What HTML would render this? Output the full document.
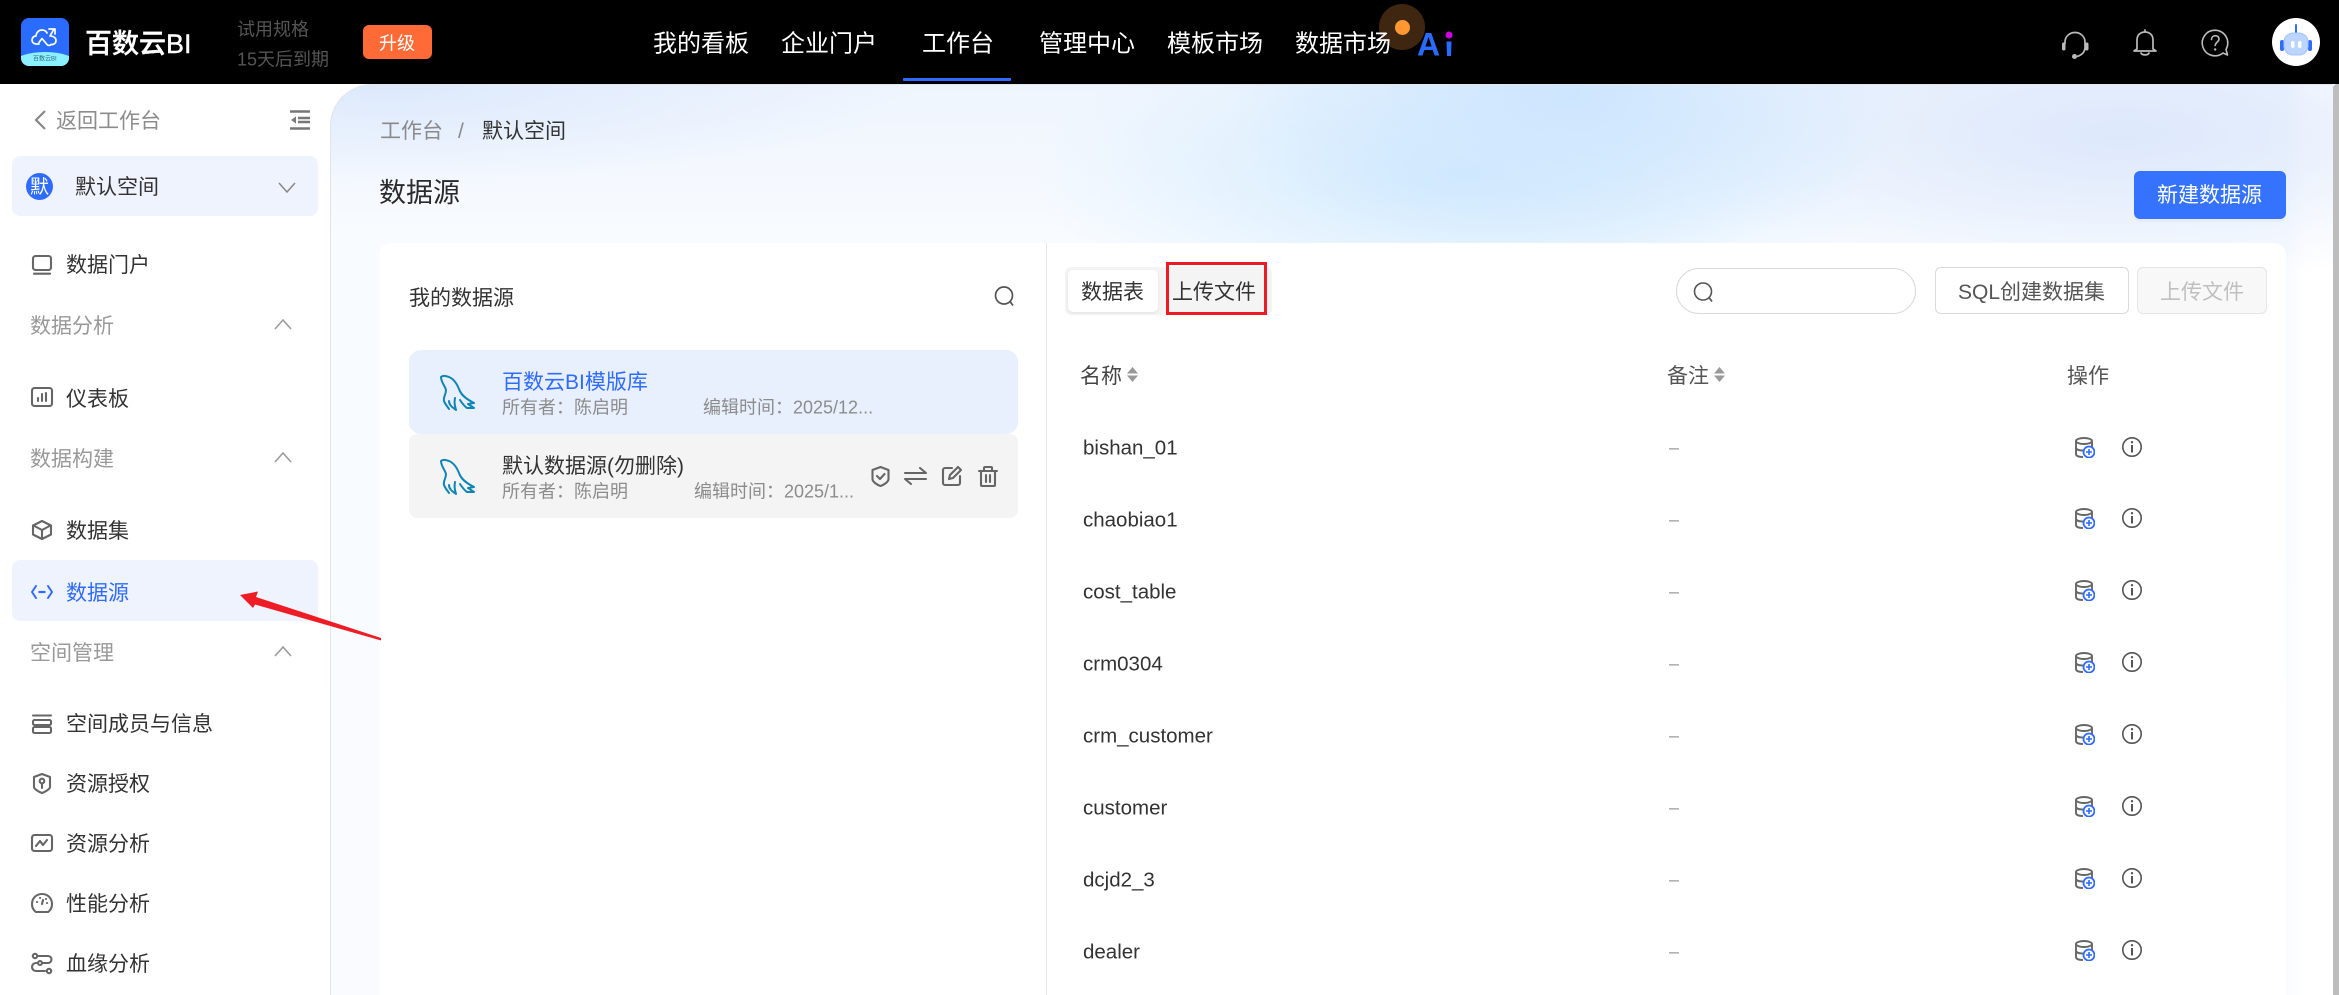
<!DOCTYPE html>
<html lang="zh-CN">
<head>
<meta charset="utf-8">
<title>百数云BI</title>
<style>
html,body{margin:0;padding:0;width:2339px;height:995px;overflow:hidden;background:#fff}
body{position:relative;font-family:"Liberation Sans","Noto Sans CJK SC",sans-serif;color:#333}
.a{position:absolute}
.t{position:absolute;white-space:nowrap;line-height:1;transform:translateY(calc(-50% + 1.5px))}
svg{position:absolute;overflow:visible;fill:none}
.f21{font-size:21px}.f18{font-size:18px}
.ic{stroke:#666;stroke-width:2.1;stroke-linecap:round;stroke-linejoin:round}
.gr{color:#999}
.nav{font-size:24px;color:#fff}
.cell{font-size:20.5px;color:#333;left:1083px}
.dash{font-size:18px;color:#999;left:1669px}
</style>
</head>
<body>
<!-- main background -->
<div class="a" style="left:330px;top:84px;width:2003px;height:911px;border-top-left-radius:42px;border-left:1px solid #e2e4e8;border-top:1px solid #e4e6ea;box-sizing:border-box;background:
radial-gradient(ellipse 340px 170px at 1240px 10px,#cde5fe 0,rgba(205,229,254,0) 100%),
radial-gradient(ellipse 430px 150px at 1130px 90px,#d2ebfe 0,rgba(210,235,254,0) 100%),
radial-gradient(ellipse 520px 100px at 60px 0,#dde9fc 0,rgba(221,233,252,0) 100%),
radial-gradient(ellipse 480px 150px at 1790px 50px,#dde8fb 0,rgba(221,232,251,0) 100%),
linear-gradient(90deg,rgba(255,255,255,0) 1955px,#fff 1975px),
linear-gradient(180deg,#eff5fe 0,#f8fbff 150px,#f9fbff 100%)"></div>
<!-- scrollbar -->
<div class="a" style="left:2333px;top:84px;width:6px;height:911px;background:#bdbdbd;border-top-left-radius:4px"></div>

<!-- header -->
<div class="a" style="left:0;top:0;width:2339px;height:84px;background:#000"></div>
<div class="a" style="left:21px;top:18px;width:48px;height:48px;border-radius:8px;overflow:hidden;background:#2a6cff">
  <div class="a" style="left:-8px;top:34px;width:64px;height:30px;border-radius:50%/12px;background:#8df0ff"></div>
  <div class="t" style="left:12px;top:39.500px;font-size:6px;color:#2a6a80">百数云BI</div>
</div>
<svg style="left:31px;top:27px" width="28" height="20" viewBox="0 0 28 20"><path d="M8 17H5.500C2.500 17 1 15 1 13s1.500-4 4-4c.5-4 3-6 6-6 2.500 0 4 1 5 3M20 9c3 .5 5 2 5 4.500 0 2.500-2 4-4 4h-1c-1 1.500-3 1-4 0l-5-6-3 4M19 9l4-7M18 2h6v5" stroke="#fff" stroke-width="1.700" stroke-linecap="round" stroke-linejoin="round"/></svg>
<div class="t" style="left:85px;top:43px;font-size:27px;font-weight:500;color:#fff;-webkit-text-stroke:.4px #fff">百数云BI</div>
<div class="t f18" style="left:237px;top:28px;color:#555">试用规格</div>
<div class="t f18" style="left:237px;top:58px;color:#555">15天后到期</div>
<div class="a" style="left:363px;top:25px;width:69px;height:34px;border-radius:6px;background:#ff6a37"></div>
<div class="t f18" style="left:379px;top:42px;color:#fff">升级</div>
<div class="t nav" style="left:653px;top:43px">我的看板</div>
<div class="t nav" style="left:781px;top:43px">企业门户</div>
<div class="t nav" style="left:922px;top:43px">工作台</div>
<div class="a" style="left:903px;top:78px;width:108px;height:3px;background:#2f6bff;border-radius:1px"></div>
<div class="t nav" style="left:1039px;top:43px">管理中心</div>
<div class="t nav" style="left:1167px;top:43px">模板市场</div>
<div class="t nav" style="left:1295px;top:43px">数据市场</div>
<div class="a" style="left:1379px;top:4px;width:46px;height:46px;border-radius:50%;background:#3f2610;mix-blend-mode:screen"></div>
<div class="a" style="left:1394.500px;top:19.500px;width:15px;height:15px;border-radius:50%;background:#ff9733"></div>
<div class="t" style="left:1417px;top:42.500px;font-size:32px;font-weight:bold;color:#2a6bff">A</div>
<svg style="left:1440px;top:28px" width="16" height="30" viewBox="0 0 16 30"><circle cx="9" cy="7" r="3.500" fill="#cf00e0"/><path d="M6.500 13.500h5L11 28H7z" fill="#2a6bff"/></svg>
<!-- header icons -->
<svg style="left:2061px;top:31px" width="28" height="29" viewBox="0 0 28 29"><path d="M4 13V11C4 5.500 8.500 1.500 14 1.500S24 5.500 24 11v5c0 5-3 8-8 9.500" stroke="#bbb" stroke-width="1.700"/><rect x="1" y="11.500" width="3.500" height="8" rx="1.700" fill="#bbb"/><rect x="24" y="11.500" width="3.500" height="8" rx="1.700" fill="#bbb"/><circle cx="13.500" cy="25.500" r="2.500" fill="#bbb"/></svg>
<svg style="left:2132px;top:29px" width="26" height="28" viewBox="0 0 26 28"><path d="M13 1v2M5 20V11c0-5 3.500-8 8-8s8 3 8 8v9l3 2H2zM9 24c1 2.500 7 2.500 8 0" stroke="#bbb" stroke-width="1.700" stroke-linejoin="round" stroke-linecap="round"/></svg>
<svg style="left:2201px;top:29px" width="28" height="28" viewBox="0 0 28 28"><path d="M14 1.200a12.800 12.800 0 1 0 8 22.800l4.500 2-1.500-5.500A12.800 12.800 0 0 0 14 1.200z" stroke="#bbb" stroke-width="1.600" stroke-linejoin="round"/><path d="M10.500 10.500c0-5 7.500-5 7.500-.5 0 3-3.500 3-3.800 6.500" stroke="#bbb" stroke-width="1.600" stroke-linecap="round"/><circle cx="14.200" cy="20.500" r="1.200" fill="#bbb"/></svg>
<div class="a" style="left:2272px;top:18px;width:48px;height:48px;border-radius:50%;background:#fff"></div>
<svg style="left:2278px;top:24px" width="36" height="36" viewBox="0 0 36 36"><path d="M18 1v8" stroke="#2f6bff" stroke-width="2" stroke-linecap="round"/><rect x="2" y="16" width="4" height="11" rx="2" fill="#2f6bff"/><rect x="30" y="16" width="4" height="11" rx="2" fill="#2f6bff"/><rect x="6" y="9" width="24" height="22" rx="9" fill="#bcd5ff" stroke="#a3c3ff"/><rect x="13" y="17" width="3.500" height="7" rx="1.700" fill="#fff"/><rect x="20" y="17" width="3.500" height="7" rx="1.700" fill="#fff"/></svg>

<!-- sidebar -->
<svg style="left:33px;top:110px" width="14" height="20" viewBox="0 0 14 20"><path d="M12 1 3 10l9 9" stroke="#888" stroke-width="2.200"/></svg>
<div class="t f21" style="left:56px;top:120px;color:#8c8c8c">返回工作台</div>
<svg style="left:290px;top:110px" width="20" height="20" viewBox="0 0 20 20"><path d="M0 1.500h20M8 8h12M8 12h12M0 18.500h20" stroke="#777" stroke-width="2.500"/><path d="M6 6.500v7L1 10z" fill="#777"/></svg>
<div class="a" style="left:12px;top:156px;width:306px;height:60px;border-radius:8px;background:#eff3fd"></div>
<div class="a" style="left:26px;top:173px;width:27px;height:27px;border-radius:50%;background:#2f6bff"></div>
<div class="t" style="left:30px;top:185.500px;font-size:19px;color:#fff">默</div>
<div class="t f21" style="left:75px;top:186px;color:#333">默认空间</div>
<svg style="left:278px;top:182px" width="18" height="11" viewBox="0 0 18 11"><path d="M1 1l8 9 8-9" stroke="#888" stroke-width="1.500"/></svg>

<!-- sidebar items -->
<svg class="ic" style="left:32px;top:255px" width="20" height="20" viewBox="0 0 20 20"><rect x="1" y="1" width="18" height="14" rx="2.500"/><path d="M2 18.700h16"/></svg>
<div class="t f21" style="left:66px;top:264px">数据门户</div>
<div class="t f21 gr" style="left:30px;top:325px">数据分析</div>
<svg style="left:274px;top:319px" width="18" height="11" viewBox="0 0 18 11"><path d="M1 10l8-9 8 9" stroke="#999" stroke-width="1.500"/></svg>
<svg class="ic" style="left:31px;top:387px" width="22" height="20" viewBox="0 0 22 20"><rect x="1" y="1" width="20" height="18" rx="2.500"/><path d="M7 14v-3M11 14V7M15 14V6"/></svg>
<div class="t f21" style="left:66px;top:398px">仪表板</div>
<div class="t f21 gr" style="left:30px;top:458px">数据构建</div>
<svg style="left:274px;top:452px" width="18" height="11" viewBox="0 0 18 11"><path d="M1 10l8-9 8 9" stroke="#999" stroke-width="1.500"/></svg>
<svg class="ic" style="left:32px;top:520px" width="20" height="20" viewBox="0 0 20 20"><path d="M10 1l9 4.500v9L10 19l-9-4.500v-9zM1.500 5.500L10 10l8.500-4.500M10 10v9"/></svg>
<div class="t f21" style="left:66px;top:530px">数据集</div>
<div class="a" style="left:12px;top:560px;width:306px;height:61px;border-radius:8px;background:#eff3fe"></div>
<svg style="left:31px;top:584px" width="22" height="16" viewBox="0 0 22 16"><path d="M5 2 1 8l4 6M17 2l4 6-4 6" stroke="#2f6bff" stroke-width="2" stroke-linecap="round" stroke-linejoin="round"/><path d="M7.500 8h7" stroke="#2f6bff" stroke-width="2.200"/></svg>
<div class="t f21" style="left:66px;top:592px;color:#2f6bff">数据源</div>
<div class="t f21 gr" style="left:30px;top:652px">空间管理</div>
<svg style="left:274px;top:646px" width="18" height="11" viewBox="0 0 18 11"><path d="M1 10l8-9 8 9" stroke="#999" stroke-width="1.500"/></svg>
<svg class="ic" style="left:32px;top:714px" width="20" height="20" viewBox="0 0 20 20"><path d="M1 1.500h18"/><rect x="1" y="6" width="18" height="5" rx="1.500"/><rect x="1" y="13" width="18" height="6" rx="1.500"/></svg>
<div class="t f21" style="left:66px;top:723px">空间成员与信息</div>
<svg class="ic" style="left:33px;top:773px" width="18" height="21" viewBox="0 0 18 21"><path d="M9 1l8 3v10c0 2-5 5-8 6-3-1-8-4-8-6V4z"/><circle cx="9" cy="8" r="2.300"/><path d="M9 10.500V15"/></svg>
<div class="t f21" style="left:66px;top:783px">资源授权</div>
<svg class="ic" style="left:31px;top:834px" width="22" height="18" viewBox="0 0 22 18"><rect x="1" y="1" width="20" height="16" rx="2.500"/><path d="M5 12l4-5 3 4 4-5"/></svg>
<div class="t f21" style="left:66px;top:843px">资源分析</div>
<svg class="ic" style="left:31px;top:893px" width="22" height="20" viewBox="0 0 22 20"><path d="M5 19C2 17 1 14 1 11 1 5 5.500 1 11 1s10 4 10 10c0 3-1 6-4 8z"/><path d="M11 11l1-4M6 9h.1M9 5h.1M15 6h.1M16 10h.1"/></svg>
<div class="t f21" style="left:66px;top:903px">性能分析</div>
<svg class="ic" style="left:31px;top:953px" width="22" height="21" viewBox="0 0 22 21"><circle cx="4" cy="3" r="2.200"/><path d="M7 3h10a3.500 3.500 0 0 1 0 7H5a4 4 0 0 0 0 8h9"/><circle cx="9" cy="10" r="2" fill="#fff"/><circle cx="18" cy="18" r="2.200"/></svg>
<div class="t f21" style="left:66px;top:963px">血缘分析</div>

<!-- breadcrumb, title -->
<div class="t f21" style="left:380px;top:130px;color:#8a8a8a">工作台</div>
<div class="t f21" style="left:458px;top:130px;color:#8a8a8a">/</div>
<div class="t f21" style="left:482px;top:130px;color:#333">默认空间</div>
<div class="t" style="left:379px;top:192px;font-size:27px;color:#2b2b2b">数据源</div>
<div class="a" style="left:2134px;top:171px;width:152px;height:48px;border-radius:6px;background:#3573ff;box-shadow:0 3px 0 rgba(0,0,0,.025)"></div>
<div class="t f21" style="left:2157px;top:194px;color:#fff">新建数据源</div>

<!-- card -->
<div class="a" style="left:379px;top:243px;width:1907px;height:752px;background:#fff;border-radius:12px 12px 0 0"></div>
<div class="a" style="left:1046px;top:243px;width:1px;height:752px;background:#e6e6e6"></div>

<!-- left panel -->
<div class="t f21" style="left:409px;top:297px;color:#333">我的数据源</div>
<svg style="left:994px;top:286px" width="20" height="20" viewBox="0 0 20 20"><circle cx="10" cy="9.500" r="8.500" stroke="#555" stroke-width="1.700"/><path d="M16 15.500L19 19.500" stroke="#555" stroke-width="1.800"/></svg>
<div class="a" style="left:409px;top:350px;width:609px;height:84px;border-radius:12px;background:#e8f0fe"></div>
<div class="a" style="left:409px;top:434px;width:609px;height:84px;border-radius:8px;background:#f4f4f4"></div>
<svg style="left:440px;top:376px" width="34" height="34" viewBox="0 0 34 34"><path d="M1 1C3-1 6 0 9 1c5 2 8 7 10 12 2 6 7 10 15 14l-6 1 6 4h-7c-3-2-5-5-7-8M1 1c0 5 4 9 5 13 0 5-3 7-2 11 1 3 3 5 5 8M9 25c0 4 3 6 7 9-1-4-2-7-1-12" stroke="#0f85b5" stroke-width="2" stroke-linejoin="round" stroke-linecap="round"/></svg>
<div class="t f21" style="left:502px;top:381px;color:#2f6bff">百数云BI模版库</div>
<div class="t f18" style="left:502px;top:406px;color:#8c8c8c">所有者：陈启明</div>
<div class="t f18" style="left:703px;top:406px;color:#8c8c8c">编辑时间：2025/12...</div>
<svg style="left:440px;top:460px" width="34" height="34" viewBox="0 0 34 34"><path d="M1 1C3-1 6 0 9 1c5 2 8 7 10 12 2 6 7 10 15 14l-6 1 6 4h-7c-3-2-5-5-7-8M1 1c0 5 4 9 5 13 0 5-3 7-2 11 1 3 3 5 5 8M9 25c0 4 3 6 7 9-1-4-2-7-1-12" stroke="#0f85b5" stroke-width="2" stroke-linejoin="round" stroke-linecap="round"/></svg>
<div class="t f21" style="left:502px;top:465px;color:#333">默认数据源(勿删除)</div>
<div class="t f18" style="left:502px;top:490px;color:#8c8c8c">所有者：陈启明</div>
<div class="t f18" style="left:694px;top:490px;color:#8c8c8c">编辑时间：2025/1...</div>
<svg class="ic" style="left:871px;top:466px" width="19" height="21" viewBox="0 0 19 21"><path d="M9.500 1l8 3v9c0 3-5 6-8 7-3-1-8-4-8-7V4z"/><path d="M6 10l3 3 4.500-5"/></svg>
<svg class="ic" style="left:904px;top:467px" width="23" height="18" viewBox="0 0 23 18"><path d="M1 6h21l-6-5M22 12H1l6 5"/></svg>
<svg class="ic" style="left:942px;top:466px" width="20" height="20" viewBox="0 0 20 20"><path d="M10 2H3a2 2 0 0 0-2 2v13a2 2 0 0 0 2 2h13a2 2 0 0 0 2-2v-7"/><path d="M7 13l1-4 8-8 3 3-8 8z"/></svg>
<svg class="ic" style="left:978px;top:466px" width="20" height="21" viewBox="0 0 20 21"><path d="M1 5h18M6 5V2a1 1 0 0 1 1-1h6a1 1 0 0 1 1 1v3M3 5v14a1 1 0 0 0 1 1h12a1 1 0 0 0 1-1V5M8 9v7M12 9v7"/></svg>

<!-- right panel toolbar -->
<div class="a" style="left:1065px;top:267px;width:207px;height:48px;border-radius:6px;background:#f4f4f4"></div>
<div class="a" style="left:1068px;top:270px;width:90px;height:42px;border-radius:5px;background:#fff;box-shadow:0 1px 3px rgba(0,0,0,.08)"></div>
<div class="t f21" style="left:1081px;top:291px;color:#333">数据表</div>
<div class="t f21" style="left:1172px;top:291px;color:#333">上传文件</div>
<div class="a" style="left:1166px;top:262px;width:101px;height:53px;box-sizing:border-box;border:3px solid #ed1c24"></div>
<div class="a" style="left:1676px;top:268px;width:240px;height:46px;box-sizing:border-box;border:1px solid #d9d9d9;border-radius:23px;background:#fff"></div>
<svg style="left:1693px;top:282px" width="20" height="20" viewBox="0 0 20 20"><circle cx="10" cy="9.500" r="8.500" stroke="#555" stroke-width="1.600"/><path d="M16 15.500L19 19.500" stroke="#555" stroke-width="1.700"/></svg>
<div class="a" style="left:1935px;top:267px;width:194px;height:47px;box-sizing:border-box;border:1px solid #d9d9d9;border-radius:6px;background:#fff"></div>
<div class="t f21" style="left:1958px;top:291px;color:#555">SQL创建数据集</div>
<div class="a" style="left:2137px;top:267px;width:130px;height:47px;box-sizing:border-box;border:1px solid #e6e6e6;border-radius:6px;background:#f8f8f8"></div>
<div class="t f21" style="left:2160px;top:291px;color:#bfbfbf">上传文件</div>

<!-- table header -->
<div class="t f21" style="left:1080px;top:375px;color:#444">名称</div>
<svg style="left:1127px;top:367px" width="11" height="15" viewBox="0 0 11 15"><path d="M5.500 0L11 6.500H0zM5.500 15L0 8.500h11z" fill="#999"/></svg>
<div class="t f21" style="left:1667px;top:375px;color:#555">备注</div>
<svg style="left:1714px;top:367px" width="11" height="15" viewBox="0 0 11 15"><path d="M5.500 0L11 6.500H0zM5.500 15L0 8.500h11z" fill="#999"/></svg>
<div class="t f21" style="left:2067px;top:375px;color:#555">操作</div>

<svg width="0" height="0" style="left:0;top:0"><defs>
<symbol id="db" viewBox="0 0 20 21"><ellipse cx="9" cy="4" rx="8" ry="3" stroke="#666" stroke-width="1.900" fill="none"/><path d="M1 4v13c0 2 3 3 7 3M17 4v6M1 10.500c0 2 3 3 7 3" stroke="#666" stroke-width="1.900" fill="none"/><circle cx="14" cy="15" r="5.500" fill="#fff" stroke="#2f6bff" stroke-width="1.800"/><path d="M11 15h6M14 12v6" stroke="#2f6bff" stroke-width="1.600"/></symbol>
<symbol id="inf" viewBox="0 0 20 20"><circle cx="10" cy="10" r="9.200" stroke="#555" stroke-width="1.600" fill="none"/><path d="M10 8V15.500" stroke="#555" stroke-width="2"/><circle cx="10" cy="5.200" r="1.200" fill="#555"/></symbol>
</defs></svg>

<!-- rows -->
<div class="t cell" style="top:447px">bishan_01</div><div class="t dash" style="top:446px">–</div>
<svg style="left:2075px;top:437px" width="20" height="21"><use href="#db"/></svg><svg style="left:2122px;top:437px" width="20" height="20"><use href="#inf"/></svg>
<div class="t cell" style="top:519px">chaobiao1</div><div class="t dash" style="top:518px">–</div>
<svg style="left:2075px;top:508px" width="20" height="21"><use href="#db"/></svg><svg style="left:2122px;top:508px" width="20" height="20"><use href="#inf"/></svg>
<div class="t cell" style="top:591px">cost_table</div><div class="t dash" style="top:590px">–</div>
<svg style="left:2075px;top:580px" width="20" height="21"><use href="#db"/></svg><svg style="left:2122px;top:580px" width="20" height="20"><use href="#inf"/></svg>
<div class="t cell" style="top:663px">crm0304</div><div class="t dash" style="top:662px">–</div>
<svg style="left:2075px;top:652px" width="20" height="21"><use href="#db"/></svg><svg style="left:2122px;top:652px" width="20" height="20"><use href="#inf"/></svg>
<div class="t cell" style="top:735px">crm_customer</div><div class="t dash" style="top:734px">–</div>
<svg style="left:2075px;top:724px" width="20" height="21"><use href="#db"/></svg><svg style="left:2122px;top:724px" width="20" height="20"><use href="#inf"/></svg>
<div class="t cell" style="top:807px">customer</div><div class="t dash" style="top:806px">–</div>
<svg style="left:2075px;top:796px" width="20" height="21"><use href="#db"/></svg><svg style="left:2122px;top:796px" width="20" height="20"><use href="#inf"/></svg>
<div class="t cell" style="top:879px">dcjd2_3</div><div class="t dash" style="top:878px">–</div>
<svg style="left:2075px;top:868px" width="20" height="21"><use href="#db"/></svg><svg style="left:2122px;top:868px" width="20" height="20"><use href="#inf"/></svg>
<div class="t cell" style="top:951px">dealer</div><div class="t dash" style="top:950px">–</div>
<svg style="left:2075px;top:940px" width="20" height="21"><use href="#db"/></svg><svg style="left:2122px;top:940px" width="20" height="20"><use href="#inf"/></svg>

<!-- sidebar right border drawn above arrow base -->
<div class="a" style="left:330px;top:140px;width:1px;height:855px;background:#e2e4e8"></div>
<!-- red arrow -->
<svg style="left:0;top:0" width="2339" height="995" viewBox="0 0 2339 995"><polygon points="240,595 258,591.500 256,597 381,638 381,640.500 255,604.500 253,608" fill="#ee1c25"/></svg>
</body>
</html>
